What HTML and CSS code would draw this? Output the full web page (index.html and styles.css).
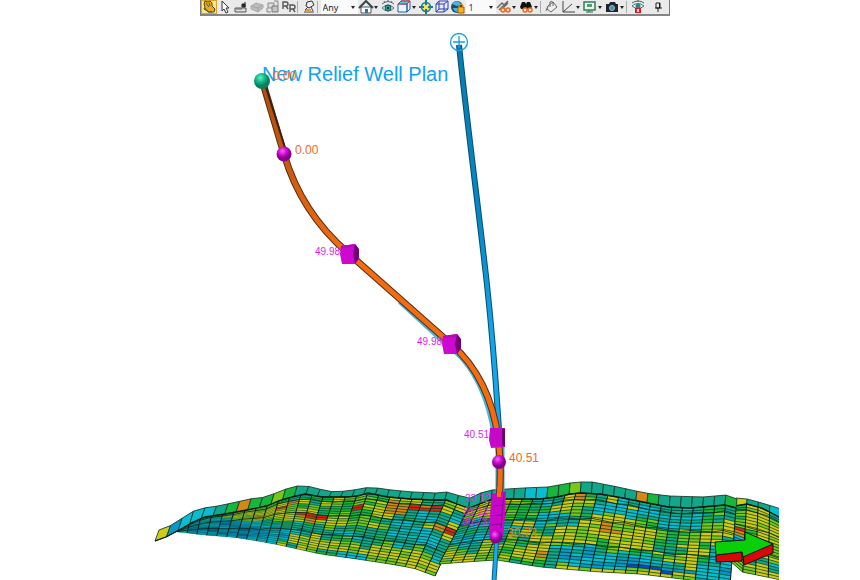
FILE: index.html
```html
<!DOCTYPE html>
<html lang="en">
<head>
<meta charset="utf-8">
<title>Relief well plan</title>
<link rel="stylesheet" href="styles.css">
</head>
<body>
<header class="toolbar-row">
<div class="toolbar" role="toolbar" aria-label="View tools">
  <button class="tool active" aria-label="Pan"><svg viewBox="0 0 16 14"><path d="M3 4l1-3 3 1 2-1 2 2v3l3 3-1 3H8L3 9l1-2z" fill="#e9ac14" stroke="#54461c"/><path d="M5 3l3 4M8 3l1 3M4 8l3 4h4" stroke="#315d7c" fill="none"/></svg></button>
  <button class="tool" aria-label="Select"><svg viewBox="0 0 16 14"><path d="M5 1v10l2-2 2 4 2-1-2-4h3z" fill="#fff" stroke="#333"/></svg></button>
  <button class="tool" aria-label="Measure"><svg viewBox="0 0 16 14"><path d="M2 8h11v4H2z" fill="#ddd" stroke="#555"/><path d="M4 8v2M6 8v2M8 8v2" stroke="#666"/><path d="M12 2v5M9 4h3v3H9z" fill="#333" stroke="#222"/></svg></button>
  <button class="tool" aria-label="Slice"><svg viewBox="0 0 16 14"><path d="M2 6l5-3 7 2-5 3zM2 6v3l7 3V8zM9 8v4l5-4V5z" fill="#bbb" stroke="#aaa"/></svg></button>
  <button class="tool" aria-label="Copy view"><svg viewBox="0 0 16 14"><path d="M3 3h6v5H3zM9 1h4v5M2 8v4h4" fill="#ddd" stroke="#888"/><path d="M7 6h6v6H7z" fill="#c4c4c4" stroke="#777"/></svg></button>
  <button class="tool" aria-label="Rename"><svg viewBox="0 0 16 14"><path d="M2 9V2h3q2 0 2 2t-2 2H2m3 0l2 3M9 12V5h3q2 0 2 2t-2 2H9m3 0l2 3" fill="none" stroke="#555" stroke-width="1.4"/></svg></button>
  <span class="sep"></span>
  <button class="tool" aria-label="Lamp"><svg viewBox="0 0 16 14"><path d="M6 2l5-1 2 4-5 3-3-2z" fill="#eee" stroke="#333"/><path d="M7 7l-3 3h3M3 12h10M10 7l2 4" fill="none" stroke="#444"/><path d="M5 9h5v3H5z" fill="#e99a32"/></svg></button>
  <span class="sep"></span>
  <label class="drop any"><select aria-label="Filter"><option>Any</option></select></label>
  <button class="tool wide" aria-label="Home"><svg viewBox="0 0 16 14"><path d="M3 7h10v6H3z" fill="#fff" stroke="#555"/><path d="M1 8l7-7 7 7" fill="none" stroke="#344650" stroke-width="2"/><path d="M7 9h3v4H7z" fill="#247aa6"/></svg><i class="caret"></i></button>
  <button class="tool" aria-label="View all"><svg viewBox="0 0 16 14"><path d="M2 8q6-6 12 0-6 6-12 0z" fill="#fff" stroke="#377078"/><circle cx="8" cy="8" r="3" fill="#27a398" stroke="#245058"/><circle cx="8" cy="8" r="1" fill="#111"/><path d="M2 4q6-5 12 0M4 1l1 2M8 0v2M12 1l-1 2" fill="none" stroke="#567"/></svg></button>
  <button class="tool wide" aria-label="View face"><svg viewBox="0 0 16 14"><path d="M2 4h9v8H2zM5 1h9v8l-3 3V4l3-3" fill="#e9f6ff" stroke="#245fa5"/><path d="M2 4l3-3h9l-3 3z" fill="#4bcde0" stroke="#d22832"/></svg><i class="caret"></i></button>
  <button class="tool" aria-label="Center"><svg viewBox="0 0 16 14"><circle cx="8" cy="7" r="4.5" fill="#f7e448" stroke="#19789d" stroke-width="1.5"/><path d="M8 0v5M8 9v5M1 7h5M10 7h5" stroke="#19789d" stroke-width="2"/></svg></button>
  <button class="tool" aria-label="Bounding box"><svg viewBox="0 0 16 14"><path d="M2 4h8v8H2zM5 1h9v8H5zM2 4l3-3M10 4l4-3M2 12l3-3M10 12l4-3" fill="none" stroke="#263fc0"/></svg></button>
  <button class="tool" aria-label="Lock globe"><svg viewBox="0 0 16 14"><circle cx="7" cy="7" r="6" fill="#174d79"/><path d="M2 4q3-4 7-2l2 2-4 2zM3 8h5v4q-4 0-5-4z" fill="#4bb4df"/><path d="M8 7h6v6H8z" fill="#ffb31a" stroke="#a95c00"/><path d="M9 7V5q2-2 4 0v2" fill="none" stroke="#e6a020"/></svg></button>
  <label class="drop num"><select aria-label="Scale"><option>1</option></select></label>
  <button class="tool wide" aria-label="Find path"><svg viewBox="0 0 16 14"><path d="M1 8l5-5 2 2 4-4M3 10l5-5M7 8l5-5" stroke="#666" fill="none" stroke-width="1.4"/><circle cx="7" cy="10" r="2" fill="none" stroke="#f06b18" stroke-width="1.5"/><circle cx="12" cy="10" r="2" fill="none" stroke="#f06b18" stroke-width="1.5"/></svg><i class="caret"></i></button>
  <button class="tool wide" aria-label="Find"><svg viewBox="0 0 16 14"><path d="M2 7l2-5h3l1 2 1-2h3l2 5-2 2H9L8 7 7 9H3z" fill="#111"/><circle cx="7" cy="10" r="2" fill="#fff" stroke="#f06b18" stroke-width="1.5"/><circle cx="12" cy="10" r="2" fill="#fff" stroke="#f06b18" stroke-width="1.5"/></svg><i class="caret"></i></button>
  <span class="sep"></span>
  <button class="tool" aria-label="Fill"><svg viewBox="0 0 16 14"><path d="M4 6l5-4 4 5-6 5-4-3zM6 7V2q2-2 3 1v3M4 6l-2 5" fill="#eee" stroke="#666"/></svg></button>
  <button class="tool wide" aria-label="Axes"><svg viewBox="0 0 16 14"><path d="M3 1v11h12M3 12l9-8" fill="none" stroke="#444"/></svg><i class="caret"></i></button>
  <button class="tool wide" aria-label="Display"><svg viewBox="0 0 16 14"><path d="M2 2h11v8H2z" fill="#e9f6e9" stroke="#2d8054" stroke-width="1.5"/><path d="M5 4h5v3H5z" fill="#4d9d79"/><path d="M7 10v2M4 12h7" stroke="#3d604c"/></svg><i class="caret"></i></button>
  <button class="tool wide" aria-label="Snapshot"><svg viewBox="0 0 16 14"><path d="M2 4h3l1-2h5l1 2h2v8H2z" fill="#20252a"/><circle cx="8" cy="8" r="2.5" fill="#498fba" stroke="#9ab9cc"/></svg><i class="caret"></i></button>
  <span class="sep"></span>
  <button class="tool" aria-label="Hide"><svg viewBox="0 0 16 14"><path d="M2 6q6-5 12 0-6 5-12 0z" fill="#eff" stroke="#477"/><circle cx="8" cy="6" r="2.5" fill="#2c8a7c"/><path d="M2 3q6-4 12 0M8 0v2" fill="none" stroke="#467"/><path d="M5 8h6v5H5z" fill="#c91d28"/><path d="M7 9l2 3M9 9l-2 3" stroke="#fff"/></svg></button>
  <button class="tool pin" aria-label="Pin"><svg viewBox="0 0 16 14"><path d="M6 3h4v5H6zM5 8h7M8 8v4" fill="#eee" stroke="#222"/><path d="M9 3h1v5H9z" fill="#111"/></svg></button>
</div>
</header>
<main>
<svg class="scene" viewBox="0 16 860 564" role="img" aria-label="Relief well trajectory and reservoir surface">
  <defs>
    <linearGradient id="blueWell" gradientUnits="userSpaceOnUse" x1="0" y1="40" x2="0" y2="440"><stop offset="0" stop-color="#087baf"/><stop offset=".45" stop-color="#0788c4"/><stop offset=".75" stop-color="#13a5ec"/><stop offset="1" stop-color="#18a9ee"/></linearGradient>
    <linearGradient id="orangeWell" gradientUnits="userSpaceOnUse" x1="0" y1="80" x2="0" y2="250"><stop offset="0" stop-color="#ae4c0c"/><stop offset=".5" stop-color="#c85a10"/><stop offset="1" stop-color="#f26c12"/></linearGradient>
    <radialGradient id="greenBall" cx=".4" cy=".3"><stop offset="0" stop-color="#62f0bd"/><stop offset=".55" stop-color="#16b98a"/><stop offset="1" stop-color="#08805e"/></radialGradient>
    <radialGradient id="pinkBall" cx=".4" cy=".3"><stop offset="0" stop-color="#ff62ff"/><stop offset=".55" stop-color="#cc0bd0"/><stop offset="1" stop-color="#850089"/></radialGradient>
    <clipPath id="view"><path d="M0 16h779v564H0z"/></clipPath>
    <g id="cube"><path d="M-8-8L6-10L9-6L10 5L6 10L-7 10L-9 0z" fill="#cf08cf"/><path d="M6-10l4 5v9l-4 6-2-10z" fill="#710075"/><path d="M-8-8L6-10 5-7-8-6z" fill="#b907bb"/></g>
  </defs>
  <g id="surface" clip-path="url(#view)"></g>
  <g stroke="#111" stroke-linejoin="round">
    <path d="M716 555l26-3v9l-26 1z" fill="#d80808"/>
    <path d="M743 556l30-12v9l-29 12z" fill="#d80808"/>
    <path d="M715 542l30-2v-8l28 12-30 13-1-5-26 3z" fill="#08cf08"/>
  </g>
  <g fill="none" stroke-linejoin="round">
    <path d="M459 45C466 115 480 220 487 285S496 385 499 430" stroke="#064c6c" stroke-width="6"/>
    <path d="M459 45C466 115 480 220 487 285S496 385 499 430" stroke="url(#blueWell)" stroke-width="4"/>
    <path d="M497 535L494 581" stroke="#075f88" stroke-width="5"/><path d="M497 535L494 581" stroke="#1da8ec" stroke-width="3"/>
    <path d="M400 301L449 346C475 364 490 401 495 437" stroke="#43b9df" stroke-width="6"/>
    <path d="M500 440v60" stroke="#32addb" stroke-width="9"/>
    <path d="M262 80L284 154C296 195 319 228 348 253L451 344C478 367 493 401 498 437Q502 468 499 500" stroke="#552b12" stroke-width="7"/>
    <path d="M262 80L284 154C296 195 319 228 348 253L451 344C478 367 493 401 498 437Q502 468 499 500" stroke="url(#orangeWell)" stroke-width="5"/>
    <path d="M265 84L287 154" stroke="#39200f" stroke-width="2"/>
    <circle cx="459" cy="42" r="8.5" stroke="#159ddd" stroke-width="1.3"/><path d="M453 42h12M459 36v12" stroke="#159ddd" stroke-width="1.3"/>
  </g>
  <text class="well-name" x="262" y="81">New Relief Well Plan</text>
  <text class="angle" x="273" y="80">0.00</text>
  <text class="angle" x="295" y="154">0.00</text>
  <text class="angle" x="509" y="462">40.51</text>
  <text class="angle deep" x="507" y="537">30.73</text>
  <g class="marks"><text x="315" y="255">49.98</text><text x="417" y="345">49.98</text><text x="464" y="438">40.51</text><text x="465" y="502">33.12</text><text x="463" y="515">33.12</text><text x="462" y="525">30.73</text></g>
  <circle cx="262" cy="81" r="8" fill="url(#greenBall)"/><circle cx="284" cy="154" r="7.5" fill="url(#pinkBall)"/>
  <use href="#cube" x="349" y="254"/><use href="#cube" x="451" y="344"/>
  <path d="M490 428h14l1 19-14 1-2-8z" fill="#c609c9"/><path d="M502 429l3-1v19l-3-2z" fill="#71006f"/>
  <path d="M492 494l14-3-1 25-2 20-6 4-8-6 1-20z" fill="#c807ca"/><path d="M504 493l-3 35M493 506l10-1M491 516l11-1M491 525l11-1" stroke="#8d078e" fill="none"/>
  <path d="M499 487v10" stroke="#ef6c13" stroke-width="4"/>
  <circle cx="499" cy="462" r="7" fill="url(#pinkBall)"/><circle cx="496" cy="537" r="6.5" fill="url(#pinkBall)"/>
</svg>
</main>
<script src="surface.js"></script>
</body>
</html>
```
FILE: styles.css
```css
* { box-sizing: border-box; }
body { margin: 0; background: #fff; font-family: "Noto Sans", sans-serif; overflow: hidden; }
.toolbar-row { display: flex; justify-content: center; padding-left: 9px; }
.toolbar { display: flex; align-items: stretch; height: 16px; padding-right: 3px; background: #eaeaea; border: 1px solid #777; border-top: 0; border-bottom: 2px solid #858585; }
.tool { display: flex; align-items: center; width: 16px; padding: 0; border: 0; background: none; }
.tool svg { display: block; flex: none; width: 16px; height: 14px; }
.tool.wide { width: 22px; }
.tool.active { background: #ffe58a; box-shadow: inset 0 0 0 1px #d9a62c; }
.tool.pin { margin-left: 4px; }
.caret, .drop::after { content: ""; flex: none; border: 2px solid transparent; border-top: 3px solid #222; border-bottom: 0; }
.sep { width: 4px; border-left: 1px solid #aaa; margin: 1px 0; }
.drop { display: flex; align-items: center; background: #fafafa; padding-right: 3px; }
.drop select { appearance: none; flex: 1; min-width: 0; border: 0; background: none; padding: 0 0 0 2px; font: 9px "Noto Sans", sans-serif; color: #222; }
.any { width: 37px; }
.num { width: 30px; }
.num select { padding-left: 3px; color: #523070; }
.scene { display: block; width: 100%; height: auto; font-family: "Liberation Sans", Arial, sans-serif; }
.well-name { font-size: 20px; fill: #10a2f2; }
.angle { font-size: 12px; fill: #ef6b18; }
.deep { fill: #d98222; }
.marks { font-size: 10px; fill: #e51be5; }
```
FILE: surface.js
```js
const surface = document.getElementById("surface");
const palette = { B: "#0868ad", b: "#0798c8", c: "#09bdd0", t: "#10a78a", g: "#18b73c", l: "#76c81b", y: "#d0cc14", o: "#d78714", r: "#d82710", d: "#0647d8" };
let seed = 17;
const random = () => (seed = seed * 16807 % 2147483647) / 2147483647;

// Point at fraction u of a polyline, measured along x.
function at(points, u) {
  const x = points[0][0] + u * (points.at(-1)[0] - points[0][0]);
  let i = 1;
  while (i < points.length - 1 && points[i][0] < x) i++;
  const [a, b] = [points[i - 1], points[i]];
  return [x, a[1] + (x - a[0]) / (b[0] - a[0]) * (b[1] - a[1])];
}
function shape(d, fill, stroke, width) {
  const p = document.createElementNS("http://www.w3.org/2000/svg", "path");
  p.setAttribute("d", d);
  p.setAttribute("fill", fill);
  if (stroke) { p.setAttribute("stroke", stroke); p.setAttribute("stroke-width", width); }
  surface.append(p);
}
function line(points) { return "M" + points.map(p => p.map(n => n.toFixed(2)).join(" ")).join("L"); }

function patch({ top, inner, bottom, body, cols, rows, map, strip }) {
  const start = body || inner;
  const pos = (u, v) => {
    const a = at(start, u), b = at(bottom, u);
    return [a[0] + (b[0] - a[0]) * v, a[1] + (b[1] - a[1]) * v];
  };
  shape(line([...Array(cols + 1)].map((_, i) => pos(i / cols, 0)).concat([...Array(cols + 1)].map((_, i) => pos(1 - i / cols, 1)))) + "Z", "#159a70");
  for (let r = 0; r < rows; r++) for (let c = 0; c < cols; c++) {
    const source = map[Math.min(map.length - 1, Math.floor((r + random() * .8) / rows * map.length))];
    let key = source[Math.min(source.length - 1, Math.floor((c + random() * .5) / cols * source.length))];
    if (random() < .16) key = { B: "b", b: "c", c: "t", t: "g", g: "l", l: "y", y: "l", o: "y", r: "o", d: "b" }[key];
    const q = [pos(c / cols, r / rows), pos((c + 1) / cols, r / rows), pos((c + 1) / cols, (r + 1) / rows), pos(c / cols, (r + 1) / rows)];
    shape(line(q) + "Z", palette[key]);
  }
  // Row lines get thinner where the rows crowd together.
  for (let c = 0; c < cols; c++) {
    const gap = (pos((c + .5) / cols, 1)[1] - pos((c + .5) / cols, 0)[1]) / rows;
    let fine = "";
    for (let r = 0; r <= rows; r++) fine += line([pos(c / cols, r / rows), pos((c + 1) / cols, r / rows)]);
    shape(fine, "none", "rgba(0,40,25,.85)", Math.min(.75, gap * .27).toFixed(2));
  }
  let columns = "", faults = "";
  for (let c = 0; c <= cols; c++) columns += line([0, .33, .67, 1].map(v => pos(c / cols, v)));
  for (const v of [.07, .32, .65]) faults += line([...Array(cols + 1)].map((_, i) => pos(i / cols, v + (i % 3) * .01)));
  shape(columns, "none", "#05190f", 1);
  shape(faults, "none", "#09261b", .8);
  for (let c = 0; c < strip.length; c++) {
    const a = c / strip.length, b = (c + 1) / strip.length;
    shape(line([at(top, a), at(top, b), at(inner, b), at(inner, a)]) + "Z", palette[strip[c]], "#173d2c", .9);
  }
  shape(line(inner), "none", "#071b12", 1.3);
}

patch({
  top: [[159,530],[172,525],[184,517],[197,509],[218,506],[237,502],[249,499],[261,498],[271,495],[283,490],[296,486],[307,486],[323,490],[334,492],[347,491],[360,489],[370,487],[391,490],[413,492],[437,493],[448,492],[460,496],[470,498]],
  inner: [[155,541],[166,537],[181,529],[193,522],[205,517],[225,514],[247,510],[267,506],[278,501],[292,497],[305,494],[322,497],[347,497],[358,496],[368,493],[388,497],[410,499],[433,500],[447,500],[457,504],[468,508]],
  body: [[178,531],[193,522],[205,517],[225,514],[247,510],[267,506],[278,501],[292,497],[305,494],[322,497],[347,497],[358,496],[368,493],[388,497],[410,499],[433,500],[447,500],[457,504],[468,508]],
  bottom: [[177,532],[205,535],[240,538],[280,545],[320,554],[350,558],[390,564],[413,568],[435,576]],
  cols: 26, rows: 24, strip: "ybccctgogglgttttttttttttttt",
  map: [
    "cctttyyllgttgglggggoyyttgy",
    "bcctyyyllyoytylgggyoorrryt",
    "bbtccyyyyrlglgggryyootcttc",
    "bbbbcyyoyylyytglggyyttccty",
    "bBbbbtlyyyyrrryyglttcctyor",
    "BbbbBbcctlyloyyyllyltcccty",
    "bBbbbBbctttcttlttttcccccct",
    "bbBBbbbbcctttttccttttttcct",
    "BbBBbbBbbbcctytggcttlctltt",
    "bBbBbBbbbbbylyyylltylyyllc",
    "cbbbBbBbbccyyyylylyyyyyyyy",
    "cbcbcbbcccytylttccclllyyyy"
  ]
});
patch({
  top: [[736,498],[747,499],[762,503],[781,509]],
  inner: [[735,506],[747,504],[762,508],[781,518]],
  bottom: [[730,561],[742,572],[757,575],[781,580]],
  cols: 4, rows: 22, strip: "yttc",
  map: ["gyyc","lyyl","gyyy","lyyy","rgyl","oyly","btyl","ctll","ttyl","gttc","lyyt","llyy"]
});
patch({
  top: [[470,498],[483,492],[492,490],[523,488],[548,487],[570,483],[580,482],[592,482],[613,486],[645,493],[668,496],[703,497],[727,495],[737,499]],
  inner: [[469,508],[490,500],[507,499],[540,499],[557,497],[570,494],[580,493],[600,494],[623,498],[643,502],[668,507],[690,508],[725,505],[736,508]],
  bottom: [[439,564],[480,561],[497,560],[540,567],[600,572],[640,574],[690,580],[730,586]],
  cols: 25, rows: 23, strip: "tttttccggltttttogttttttg",
  map: [
    "tyyllgtctyogtyctttttctggt",
    "yyylggtctyyltccocccttctlt",
    "lyylgggtyyltccccccccctgty",
    "tyylgggccyltcyyctlcccclly",
    "cctllttcccttyyyylgttlggyy",
    "tccttyycltcyyoylyylgglyyt",
    "ccttcccttyylyooyyyytglyyc",
    "ttccttyytllllyylylggyytcc",
    "cbcctltyyyyllglyyytttyycc",
    "tccytltgyylcctllggltyygcc",
    "lttyyllyycbtbccccctyyytcc",
    "yltylgyyotbbcccbbbcctyccb",
    "yyylllyyltccbbbbddddbbccc",
    "lyyllytggtyllyyllyyyyltcc"
  ]
});
```
